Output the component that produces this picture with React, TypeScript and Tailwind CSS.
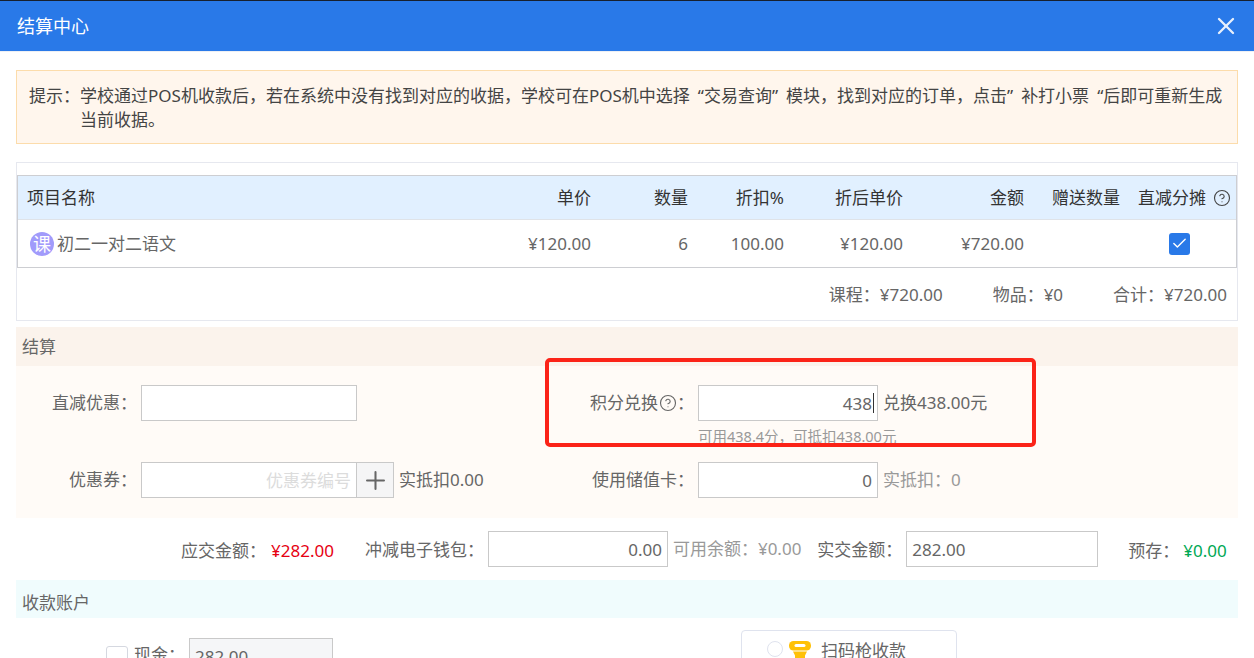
import { Check, CircleHelp, Plus, X } from "lucide-react";

const font = { fontFamily: '"Noto Sans", "Noto Sans CJK SC", sans-serif' };

function Field({ value = "", placeholder = "", className = "" }: { value?: string; placeholder?: string; className?: string }) {
  return (
    <input
      readOnly
      value={value}
      placeholder={placeholder}
      className={`h-9 border border-[#c9c9c9] bg-white px-[5px] text-[17px] text-[#666] outline-none placeholder:text-[#dcdcdc] ${className}`}
    />
  );
}

const headers = ["单价", "数量", "折扣%", "折后单价", "金额", "赠送数量"];
const cells = ["¥120.00", "6", "100.00", "¥120.00", "¥720.00", ""];
const cols = "grid grid-cols-[473px_100px_97px_96px_119px_121px_96px_116px] items-center";

export default function App() {
  return (
    <div style={font} className="h-[658px] w-[1254px] overflow-hidden bg-white text-[17px] text-[#666] relative">
      <header className="flex h-[52px] items-center justify-between border-t border-t-[#17202e] border-b border-b-[#eef0f4] bg-[#2979e8] pl-[17px] pr-[14px] text-white">
        <span className="text-lg leading-none">结算中心</span>
        <X size={28} strokeWidth={2} className="text-[#e8f0fc]" />
      </header>

      <main className="px-4 pt-[18px]">
        <div className="flex h-[74px] border border-[#fcdcab] bg-[#fff6ed] pl-3 pr-2 pt-[13px] leading-6 text-[#444]">
          <span className="w-[51px] shrink-0">提示：</span>
          <p>
            学校通过POS机收款后，若在系统中没有找到对应的收据，学校可在POS机中选择
            <span className="ml-2">“</span>交易查询<span className="mr-2">”</span>
            模块，找到对应的订单，点击<span className="mr-2">”</span>补打小票<span className="ml-2">“</span>后即可重新生成当前收据。
          </p>
        </div>

        <section className="mt-[18px] h-[159px] border border-[#e6e8ef] pt-3">
          <div className="border border-[#cdced2]">
            <div className={`${cols} h-11 border-b border-b-[#dfe3e8] bg-[#e1f0ff] text-[#333]`}>
              <span className="pl-[9px]">项目名称</span>
              {headers.map((h) => (
                <span key={h} className="text-right">{h}</span>
              ))}
              <span className="flex items-center justify-end gap-[7px] pr-[5px]">
                直减分摊
                <CircleHelp size={18} strokeWidth={1.5} className="text-[#444]" />
              </span>
            </div>
            <div className={`${cols} h-[47px]`}>
              <span className="flex items-center gap-[3px] pl-3">
                <span className="flex h-6 w-6 items-center justify-center rounded-full bg-[#a19bfb] text-[18px] leading-none text-white">课</span>
                初二一对二语文
              </span>
              {cells.map((c, i) => (
                <span key={i} className="text-right">{c}</span>
              ))}
              <span className="flex justify-end pr-[46px]">
                <span className="flex h-[22px] w-[21px] items-center justify-center rounded-[3px] bg-[#2979e8] text-white">
                  <Check size={17} strokeWidth={2} />
                </span>
              </span>
            </div>
          </div>
          <div className="flex h-[53px] items-center justify-end gap-[50px] pr-[10px]">
            <span>课程：¥720.00</span>
            <span>物品：¥0</span>
            <span>合计：¥720.00</span>
          </div>
        </section>

        <h2 className="mt-[6px] flex h-[39px] items-center bg-[#fbf3ec] pl-[6px] pt-px text-[17px] font-normal">结算</h2>
        <div className="grid h-[152px] grid-cols-[125px_432px_125px_1fr] content-start items-start bg-[#fffbf7] pt-[19px]">
          <span className="pr-1 text-right leading-9">直减优惠：</span>
          <Field className="w-[216px]" />
          <span className="flex items-center justify-end pr-1 leading-9">
            积分兑换
            <CircleHelp size={18} strokeWidth={1.5} className="ml-px text-[#666]" />：
          </span>
          <div>
            <div className="flex items-center">
              <div className="relative">
                <Field value="438" className="w-[180px] text-right" />
                <span className="absolute right-[4px] top-[8px] h-5 w-px bg-[#333]" />
              </div>
              <span className="ml-[5px]">兑换438.00元</span>
            </div>
            <p className="mt-[5px] h-[36px] text-[14.5px] leading-[20px] text-[#999]">可用438.4分，可抵扣438.00元</p>
          </div>

          <span className="pr-1 text-right leading-9">优惠券：</span>
          <div className="flex items-center">
            <Field placeholder="优惠券编号" className="w-[216px] text-right" />
            <button className="flex h-9 w-[37px] items-center justify-center border border-l-0 border-[#c9c9c9] bg-[#f5f5f6] text-[#666]">
              <Plus size={29} strokeWidth={1.7} />
            </button>
            <span className="ml-[5px]">实抵扣0.00</span>
          </div>
          <span className="pr-1 text-right leading-9">使用储值卡：</span>
          <div className="flex items-center">
            <Field value="0" className="w-[180px] text-right" />
            <span className="ml-[5px] text-[#999]">实抵扣：0</span>
          </div>
        </div>

        <div className="mt-[13px] flex h-9 items-center pl-[165px]">
          <span className="w-[90px] pt-[3px]">应交金额：</span>
          <span className="pt-[3px] text-[#e60012]">¥282.00</span>
          <span className="ml-[31px] pt-px">冲减电子钱包：</span>
          <Field value="0.00" className="ml-1 w-[180px] text-right" />
          <span className="ml-[5px] text-[#999]">可用余额：¥0.00</span>
          <span className="ml-4 pt-px">实交金额：</span>
          <Field value="282.00" className="ml-1 w-[192px]" />
          <span className="ml-[30px] pt-[3px]">预存：</span>
          <span className="ml-1 pt-[3px] text-[#00a854]">¥0.00</span>
        </div>

        <h2 className="mt-[13px] flex h-[38px] items-center bg-[#f0fcfd] pl-[6px] pt-[8px] text-[17px] font-normal">收款账户</h2>
        <div className="flex items-start pt-3">
          <div className="ml-[90px] mt-[16px] h-[22px] w-[22px] shrink-0 rounded-[3px] border border-[#d5d8e0] bg-white" />
          <span className="ml-[6px] mt-[12px] shrink-0">现金：</span>
          <Field value="282.00" className="ml-1 mt-2 w-36 !bg-[#f5f6f8]" />
          <div className="ml-[408px] flex h-[60px] w-[216px] items-start rounded border border-[#dfe3ee] pl-[25px] pt-[10px]">
            <span className="h-4 w-4 rounded-full border border-[#dfe3ee]" />
            <svg width="22" height="24" viewBox="0 0 22 24" className="ml-[6px]">
              <rect x="0" y="0" width="22" height="9.5" rx="4.5" fill="#ffc107" />
              <rect x="5.5" y="3" width="11" height="3" rx="1.5" fill="#fff" />
              <path d="M4 10.5h14l-2 4v9.5H6v-9.5z" fill="#ffc107" />
            </svg>
            <span className="ml-[10px] leading-5">扫码枪收款</span>
          </div>
        </div>
      </main>

      <div className="pointer-events-none absolute left-[545px] top-[358px] h-[89px] w-[491px] rounded-[5px] border-4 border-[#fb2318]" />
    </div>
  );
}
